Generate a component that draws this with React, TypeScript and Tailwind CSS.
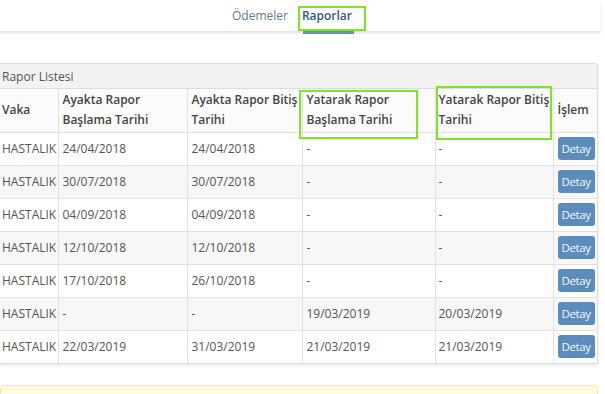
import React from "react";

const rows = [
  ["HASTALIK", "24/04/2018", "24/04/2018", "-", "-"],
  ["HASTALIK", "30/07/2018", "30/07/2018", "-", "-"],
  ["HASTALIK", "04/09/2018", "04/09/2018", "-", "-"],
  ["HASTALIK", "12/10/2018", "12/10/2018", "-", "-"],
  ["HASTALIK", "17/10/2018", "26/10/2018", "-", "-"],
  ["HASTALIK", "-", "-", "19/03/2019", "20/03/2019"],
  ["HASTALIK", "22/03/2019", "31/03/2019", "21/03/2019", "21/03/2019"],
];

export default function App() {
  return (
    <div
      className="relative w-[605px] h-[394px] overflow-hidden bg-white text-[#555]"
      style={{ fontFamily: "'Open Sans', sans-serif" }}
    >
      {/* tab bar */}
      <div className="h-[31px] w-[600px] bg-white shadow-[0_2px_3px_rgba(0,0,0,0.12)] flex justify-center items-start pr-[16px]">
        <div className="flex gap-[14px] pt-[7px] text-[12px] leading-[18px]">
          <span className="text-[#5f7891]">Ödemeler</span>
          <span className="relative text-[#35597f] font-semibold">
            Raporlar
            <span className="absolute left-[1px] right-[-2px] top-[24px] h-[3px] bg-[#6f8fae]" />
          </span>
        </div>
      </div>

      <div className="h-[32px]" />

      {/* panel */}
      <div className="w-[598px] border border-[#dcdcdc] border-l-0 rounded-tr-[3px] shadow-[0_2px_3px_rgba(0,0,0,0.08)]">
        <div className="h-[25px] bg-[#f2f2f2] border-b border-[#dcdcdc] px-[2px] text-[12px] leading-[25px] text-[#555]">
          Rapor Listesi
        </div>
        <table className="w-full border-collapse table-fixed text-[12px]">
          <colgroup>
            <col className="w-[58px]" />
            <col className="w-[129px]" />
            <col className="w-[115px]" />
            <col className="w-[133px]" />
            <col className="w-[118px]" />
            <col />
          </colgroup>
          <thead>
            <tr className="h-[43px] bg-[#fbfbfb] text-[#444] font-semibold text-[12px] leading-[20px]">
              <th className="text-left font-semibold px-[2px] border-r border-[#e2e2e2]">Vaka</th>
              <th className="text-left font-semibold px-[4px] border-r border-[#e2e2e2]">Ayakta Rapor Başlama Tarihi</th>
              <th className="text-left font-semibold px-[4px] border-r border-[#e2e2e2]">Ayakta Rapor Bitiş Tarihi</th>
              <th className="text-left font-semibold px-[4px] border-r border-[#e2e2e2]">Yatarak Rapor Başlama Tarihi</th>
              <th className="text-left font-semibold px-[3px] border-r border-[#e2e2e2]">Yatarak Rapor Bitiş Tarihi</th>
              <th className="text-left font-semibold px-[4px]">İşlem</th>
            </tr>
          </thead>
          <tbody>
            {rows.map((r, i) => (
              <tr
                key={i}
                className={`h-[33px] border-t border-[#e2e2e2] ${i % 2 === 1 ? "bg-[#f7f7f7]" : "bg-white"}`}
              >
                <td className="px-[2px] border-r border-[#e2e2e2] text-[#555] whitespace-nowrap">{r[0]}</td>
                <td className="px-[4px] border-r border-[#e2e2e2]">{r[1]}</td>
                <td className="px-[4px] border-r border-[#e2e2e2]">{r[2]}</td>
                <td className="px-[4px] border-r border-[#e2e2e2]">{r[3]}</td>
                <td className="px-[3px] border-r border-[#e2e2e2]">{r[4]}</td>
                <td className="px-[4px]">
                  <span className="inline-flex items-center justify-center w-[37px] h-[23px] rounded-[3px] bg-[#5b8cbb] text-[#f4f7fb] text-[11.5px] tracking-[-0.4px]">
                    Detay
                  </span>
                </td>
              </tr>
            ))}
          </tbody>
        </table>
      </div>

      {/* yellow alert */}
      <div className="absolute left-0 top-[385px] w-[598px] h-[30px] bg-[#fffbe3] border border-[#f3e6a0] rounded-[4px]" />

      {/* annotation boxes */}
      <div className="absolute left-[298px] top-[6px] w-[68px] h-[25px] border-2 border-[#7ee22e]" />
      <div className="absolute left-[299px] top-[90px] w-[119px] h-[49px] border-2 border-[#7ee22e]" />
      <div className="absolute left-[436px] top-[86px] w-[116px] h-[54px] border-2 border-[#7ee22e]" />
    </div>
  );
}
